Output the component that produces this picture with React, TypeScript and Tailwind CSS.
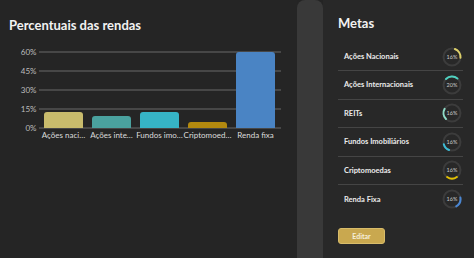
const bars = [
  { label: 'Ações naci…', value: 12.6, color: '#c8bb6c' },
  { label: 'Ações inte…', value: 9.5, color: '#4aa19e' },
  { label: 'Fundos imo…', value: 12.6, color: '#36b4c6' },
  { label: 'Criptomoed…', value: 4.7, color: '#b3890f' },
  { label: 'Renda fixa', value: 60, color: '#4a84c4' },
]

const metas = [
  { name: 'Ações Nacionais', pct: '16%', from: 20, to: 95, color: '#ddd06a' },
  { name: 'Ações Internacionais', pct: '20%', from: -45, to: 40, color: '#4fd0bf' },
  { name: 'REITs', pct: '16%', from: -135, to: -60, color: '#8fdcc8' },
  { name: 'Fundos Imobiliários', pct: '16%', from: -160, to: -105, color: '#3dbcd6' },
  { name: 'Criptomoedas', pct: '16%', from: 145, to: 215, color: '#e3c100' },
  { name: 'Renda Fixa', pct: '16%', from: 80, to: 150, color: '#4a86d2' },
]

const point = (cx: number, cy: number, r: number, deg: number) => {
  const rad = ((deg - 90) * Math.PI) / 180
  return [cx + r * Math.cos(rad), cy + r * Math.sin(rad)]
}

const arcPath = (from: number, to: number) => {
  const [x1, y1] = point(10, 10, 8.5, from)
  const [x2, y2] = point(10, 10, 8.5, to)
  const large = to - from > 180 ? 1 : 0
  return `M ${x1} ${y1} A 8.5 8.5 0 ${large} 1 ${x2} ${y2}`
}

const Ring = ({ pct, from, to, color }: { pct: string; from: number; to: number; color: string }) => (
  <svg width="20" height="20" viewBox="0 0 20 20">
    <circle cx="10" cy="10" r="8.5" fill="none" stroke="#3c3c3c" strokeWidth="2" />
    <path d={arcPath(from, to)} fill="none" stroke={color} strokeWidth="2" strokeLinecap="round" />
    <text x="10" y="12" textAnchor="middle" fontSize="5.5" fill="#c8c8c8" fontFamily="Lato, sans-serif">
      {pct}
    </text>
  </svg>
)

// svg top sits at page y=37
const BarChart = () => {
  const base = 91
  const scale = 76 / 60
  const ticks = [0, 15, 30, 45, 60]
  return (
    <svg width="297" height="110" viewBox="0 0 297 110" className="block">
      {ticks.map((t) => {
        const y = base - t * scale
        return (
          <g key={t}>
            <line x1="39" x2="281" y1={y} y2={y} stroke="#6b6b6b" strokeWidth="1" />
            <text x="36.5" y={y + 3} textAnchor="end" fontSize="8" fill="#bdbdbd" fontFamily="Lato, sans-serif">
              {t}%
            </text>
          </g>
        )
      })}
      {bars.map((b, i) => {
        const h = b.value * scale
        const x = 44 + i * 48
        return (
          <g key={b.label}>
            <path
              d={`M ${x} ${base} V ${base - h + 3} Q ${x} ${base - h} ${x + 3} ${base - h} H ${x + 36} Q ${x + 39} ${base - h} ${x + 39} ${base - h + 3} V ${base} Z`}
              fill={b.color}
            />
            <text x={x + 19.5} y="101" textAnchor="middle" fontSize="8" fill="#dcdcdc" fontFamily="Lato, sans-serif">
              {b.label}
            </text>
          </g>
        )
      })}
    </svg>
  )
}

export default function App() {
  return (
    <div className="flex h-[258px] w-[474px] overflow-hidden bg-[#242424] font-['Lato',sans-serif]">
      <div className="w-[297px] shrink-0 bg-[#252525] pt-[15px]">
        <h2 className="pl-[9px] text-[13px] leading-[20px] font-bold text-[#f2f2f2]">Percentuais das rendas</h2>
        <div className="mt-[2px]">
          <BarChart />
        </div>
      </div>
      <div className="w-[26px] shrink-0 rounded-t-[8px] bg-[#393939]" />
      <div className="flex-1 bg-[#282828] pt-[13px] pr-[11px] pl-[15px]">
        <h2 className="text-[13px] leading-[20px] font-bold text-[#f2f2f2]">Metas</h2>
        <ul className="mt-[10px]">
          {metas.map((m, i) => (
            <li
              key={m.name}
              className={`flex h-[28.4px] items-center justify-between pr-[1px] pl-[6px] ${
                i < metas.length - 1 ? 'border-b border-[#454545]' : ''
              }`}
            >
              <span className="text-[7.5px] font-bold text-[#ececec]">{m.name}</span>
              <Ring pct={m.pct} from={m.from} to={m.to} color={m.color} />
            </li>
          ))}
        </ul>
        <button
          type="button"
          className="mt-[15px] h-[16px] w-[47px] rounded-[3px] border border-[#d8bc6a] bg-[#c9a84f] text-[7px] font-bold text-[#f6efda]"
        >
          Editar
        </button>
      </div>
    </div>
  )
}
